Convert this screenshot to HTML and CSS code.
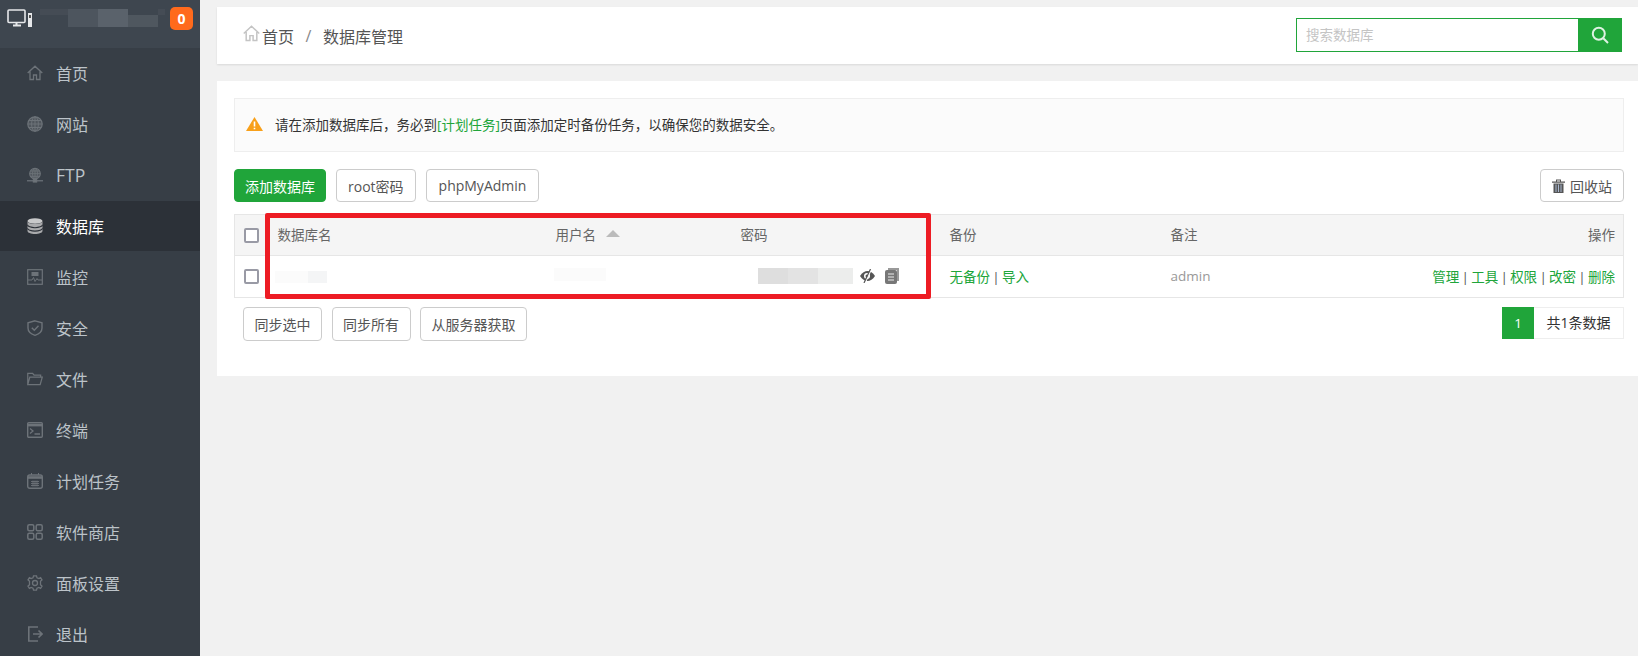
FILE: index.html
```html
<!DOCTYPE html>
<html lang="zh-CN">
<head>
    <meta charset="UTF-8">
    <meta name="viewport" content="width=device-width, initial-scale=1.0">
    <title>数据库管理</title>
    <link rel="stylesheet" href="styles.css">
</head>
<body>

<div class="sidebar">
    <div class="side-head">
        <svg class="server-icon" viewBox="0 0 25 18" fill="none" stroke="#e6e8ea">
            <rect x="1" y="1" width="17" height="12.5" rx="1" stroke-width="1.6"/>
            <path d="M6 16.5h8" stroke-width="2"/>
            <path d="M9.5 14v2" stroke-width="2"/>
            <rect x="21" y="4" width="4" height="14" fill="#e6e8ea" stroke="none"/>
            <rect x="22" y="6" width="2" height="3" fill="#555" stroke="none"/>
        </svg>
        <div class="mosaic">
            <span class="m1"></span><span class="m2"></span><span class="m3"></span><span class="m4"></span><span class="m5"></span>
        </div>
        <span class="badge">0</span>
    </div>
    <ul class="menu">
        <li>
            <svg viewBox="0 0 16 16"><path d="M.7 8 8 1.2 15.300 8M3 6.500V14.500H6.500V10H9.500V14.500H13V6.500" stroke-width="1.300"/></svg>
            首页
        </li>
        <li>
            <svg viewBox="0 0 16 16"><circle cx="8" cy="8" r="7.200" fill="#50565d" stroke-width="1.200"/><ellipse cx="8" cy="8" rx="3.400" ry="7.200"/><path d="M8 .8V15.200M.8 8H15.200M1.800 4.500H14.200M1.800 11.500H14.200"/></svg>
            网站
        </li>
        <li>
            <svg viewBox="0 0 18 16"><circle cx="9" cy="6.500" r="6" fill="#50565d" stroke-width="1.200"/><ellipse cx="9" cy="6.500" rx="2.800" ry="6"/><path d="M9 .5V12.500M3 6.500H15M4 3.500H14M4 9.500H14"/><path d="M0 14.500H18" stroke-width="1.400"/><rect x="7" y="13" width="4" height="3" fill="#6d7379"/></svg>
            <span class="menu-latin">FTP</span>
        </li>
        <li class="active">
            <svg viewBox="0 0 16 16"><ellipse cx="8" cy="3" rx="7.500" ry="2.800" fill="#c8c9ca" stroke="none"/><path d="M.5 3V13C.5 14.600 4 16 8 16S15.500 14.600 15.500 13V3C15.500 4.700 12 6 8 6S.5 4.700 .5 3Z" fill="#a9aaac" stroke="none"/><path d="M.5 6.800C.5 8.400 4 9.700 8 9.700S15.500 8.400 15.500 6.800M.5 10.200C.5 11.800 4 13.100 8 13.100S15.500 11.800 15.500 10.200" stroke="#2c3138" stroke-width="1.100"/></svg>
            数据库
        </li>
        <li>
            <svg viewBox="0 0 16 16"><rect x=".7" y=".7" width="14.600" height="14.600" stroke-width="1.200"/><path d="M1 11H5L6.500 8.500 8 12.500 10 9.500 11 11H15"/><rect x="5" y="3.500" width="6" height="3" fill="#6d7379"/></svg>
            监控
        </li>
        <li>
            <svg viewBox="0 0 16 16"><path d="M8 .8 15 2.800V8C15 11.800 11.500 14.200 8 15.300 4.500 14.200 1 11.800 1 8V2.800Z" stroke-width="1.400"/><path d="M4.800 7.800 7.300 10.300 11.500 5.800" stroke-width="1.400"/></svg>
            安全
        </li>
        <li>
            <svg viewBox="0 0 17 14"><path d="M.8 13V1H6L7.500 3H14.500V5M.8 13H14L16.200 5H3L.8 13Z" stroke-width="1.300"/></svg>
            文件
        </li>
        <li>
            <svg viewBox="0 0 16 16"><rect x=".7" y=".7" width="14.600" height="14.600" rx="1" stroke-width="1.400"/><path d="M1 3.200H15" stroke-width="2.400"/><path d="M3 6.500 6 9 3 11.500M7.500 12H13" stroke-width="1.300"/></svg>
            终端
        </li>
        <li>
            <svg viewBox="0 0 16 16"><rect x=".7" y="2" width="14.600" height="13.300" rx="2" stroke-width="1.400"/><path d="M1 4.500H15" stroke-width="2.600"/><path d="M4.500 0V2M11.500 0V2"/><path d="M4 8.500H12M4 10.500H12M4 12.500H12M6 7.500V13.500M8 7.500V13.500M10 7.500V13.500" stroke-width=".9"/></svg>
            计划任务
        </li>
        <li>
            <svg viewBox="0 0 16 16"><rect x=".8" y=".8" width="6" height="6" rx="1.500" stroke-width="1.500"/><rect x="9.200" y=".8" width="6" height="6" rx="1.500" stroke-width="1.500"/><rect x=".8" y="9.200" width="6" height="6" rx="1.500" stroke-width="1.500"/><rect x="9.200" y="9.200" width="6" height="6" rx="1.500" stroke-width="1.500"/></svg>
            软件商店
        </li>
        <li>
            <svg viewBox="0 0 16 16"><path d="M6.500.8H9.500L10 2.800 11.800 3.600 13.600 2.600 15 4.800 13.500 6.200V9.800L15 11.200 13.600 13.400 11.800 12.400 10 13.200 9.500 15.200H6.500L6 13.200 4.200 12.400 2.400 13.400 1 11.200 2.500 9.800V6.200L1 4.800 2.400 2.600 4.200 3.600 6 2.800Z" stroke-width="1.300"/><circle cx="8" cy="8" r="2.500" stroke-width="1.300"/></svg>
            面板设置
        </li>
        <li>
            <svg viewBox="0 0 16 16"><path d="M11 1H1.800V15H11M6 8H15M11.500 4.500 15 8 11.500 11.500" stroke-width="1.600"/></svg>
            退出
        </li>
    </ul>
</div>

<div class="main">
    <div class="topbar">
        <div class="crumbs">
            <svg class="crumb-home" viewBox="0 0 16 16"><path d="M.7 8 8 1.200 15.300 8M3 6.500V14.500H6.500V10H9.500V14.500H13V6.500"/></svg>
            <span>首页</span>
            <span class="crumb-sep">/</span>
            <span>数据库管理</span>
        </div>
        <div class="search">
            <input type="text" placeholder="搜索数据库">
            <button type="button" class="search-btn">
                <svg viewBox="0 0 18 18" fill="none" stroke="#dff2e3" stroke-width="2"><circle cx="7.800" cy="7.800" r="6"/><path d="M12.300 12.300 17 17"/></svg>
            </button>
        </div>
    </div>

    <div class="panel">
        <div class="notice">
            <svg class="warn-icon" viewBox="0 0 17 14"><path d="M8.500 0 17 14H0Z" fill="#f8a01a"/><path d="M8.500 4.500V9.500M8.500 10.700V12.300" stroke="#fff" stroke-width="1.600"/></svg>
            <span>请在添加数据库后，务必到<a href="#">[计划任务]</a>页面添加定时备份任务，以确保您的数据安全。</span>
        </div>

        <div class="toolbar">
            <button type="button" class="btn btn-green">添加数据库</button>
            <button type="button" class="btn btn-root">root密码</button>
            <button type="button" class="btn btn-pma">phpMyAdmin</button>
            <button type="button" class="btn btn-recycle">
                <svg viewBox="0 0 13 14"><path d="M0 2.500H13V3.700H0ZM4 2.500V.6H9V2.500H8V1.500H5V2.500ZM1.500 4.500H11.500V14H1.500Z" fill="#555"/><path d="M4 5.500V13M6.500 5.500V13M9 5.500V13" stroke="#a9b8d0" stroke-width="1"/></svg>
                回收站
            </button>
        </div>

        <table class="db-table">
            <colgroup>
                <col class="c-check"><col class="c-name"><col class="c-user"><col class="c-pass"><col class="c-backup"><col class="c-note"><col>
            </colgroup>
            <thead>
                <tr>
                    <th class="check-cell"><span class="checkbox"></span></th>
                    <th>数据库名</th>
                    <th>用户名 <span class="sort-up"></span></th>
                    <th>密码</th>
                    <th>备份</th>
                    <th>备注</th>
                    <th class="right">操作</th>
                </tr>
            </thead>
            <tbody>
                <tr>
                    <td class="check-cell"><span class="checkbox"></span></td>
                    <td><div class="blur-name"><span></span><span></span></div></td>
                    <td><div class="blur-user"></div></td>
                    <td>
                        <div class="pass-cell">
                            <div class="blur-pass"><span></span><span></span><span></span></div>
                            <svg class="eye-icon" viewBox="0 0 15 14"><path d="M0 7C2 3.500 5 2 7.500 2S13 3.500 15 7C13 10.500 10 12 7.500 12S2 10.500 0 7Z" fill="#555"/><circle cx="7" cy="7" r="3" fill="#fff"/><circle cx="7" cy="7" r="1.500" fill="#555"/><path d="M11.500 0 5 14" stroke="#fff" stroke-width="1.400"/><path d="M10.500 0 4 14" stroke="#555" stroke-width="1.200"/></svg>
                            <svg class="copy-icon" viewBox="0 0 14 16"><path d="M3 0H14V13H12V2H3Z" fill="#999"/><rect y="2" width="12" height="14" rx="2" fill="#777"/><path d="M3 6H9M3 9H9M3 12H9" stroke="#eee" stroke-width="1.200"/></svg>
                        </div>
                    </td>
                    <td><a href="#">无备份</a> | <a href="#">导入</a></td>
                    <td class="note">admin</td>
                    <td class="right"><a href="#">管理</a> | <a href="#">工具</a> | <a href="#">权限</a> | <a href="#">改密</a> | <a href="#">删除</a></td>
                </tr>
            </tbody>
        </table>

        <div class="table-foot">
            <button type="button" class="btn">同步选中</button>
            <button type="button" class="btn">同步所有</button>
            <button type="button" class="btn">从服务器获取</button>
            <div class="pager">
                <span class="page-now">1</span>
                <span class="page-total">共1条数据</span>
            </div>
        </div>
    </div>

    <div class="mark"></div>
</div>

</body>
</html>
```

FILE: styles.css
```css
* {
    box-sizing: border-box;
}
html, body {
    height: 656px;
}
body {
    margin: 0;
    display: flex;
    overflow: hidden;
    background-color: #f1f1f1;
    font-family: "Open Sans", "Noto Sans CJK SC", sans-serif;
    font-size: 13.5px;
    color: #555;
}
a {
    color: #20a53a;
    text-decoration: none;
}

/* sidebar */
.sidebar {
    width: 200px;
    height: 656px;
    flex-shrink: 0;
    overflow: hidden;
    background-color: #373e46;
}
.side-head {
    height: 48px;
    padding: 7px 7px 0;
    display: flex;
    align-items: flex-start;
    background-color: #3e464f;
}
.server-icon {
    width: 25px;
    height: 18px;
    margin-top: 2px;
    flex-shrink: 0;
}
.mosaic {
    display: flex;
    margin: 2px 0 0 8px;
    width: 130px;
}
.mosaic span {
    display: block;
    height: 18px;
}
.mosaic .m1 {
    width: 28px;
    height: 6px;
    background-color: #454c55;
}
.mosaic .m2 {
    width: 30px;
    background-color: #4d555e;
}
.mosaic .m3 {
    width: 30px;
    background-color: #5a626b;
}
.mosaic .m4 {
    width: 30px;
    height: 12px;
    margin-top: 6px;
    background-color: #4f575f;
}
.mosaic .m5 {
    width: 7px;
    height: 6px;
    background-color: #454c55;
}
.badge {
    width: 23px;
    height: 23px;
    border-radius: 5px;
    background-color: #ff6a1c;
    color: #fff;
    font-size: 14px;
    font-weight: 700;
    line-height: 23px;
    text-align: center;
}
.menu {
    list-style: none;
    margin: 0;
    padding: 0;
}
.menu li {
    height: 50px;
    margin-bottom: 1px;
    padding: 0 0 1px 27px;
    display: flex;
    align-items: center;
    font-size: 16px;
    color: #bcc3c9;
}
.menu li svg {
    width: 16px;
    height: 16px;
    margin-right: 13px;
    flex-shrink: 0;
    fill: none;
    stroke: #6d7379;
    stroke-width: 1;
}
.menu li.active {
    background-color: #2c3138;
    color: #fff;
}
.menu-latin {
    font-size: 17.5px;
}

/* main column */
.main {
    flex: 1;
    position: relative;
    padding: 7px 0 0 17px;
}
.topbar {
    height: 57px;
    padding: 0 16px 0 26px;
    display: flex;
    align-items: center;
    justify-content: space-between;
    background-color: #fff;
    box-shadow: 0 1px 2px rgba(0, 0, 0, 0.1);
}
.crumbs {
    display: flex;
    align-items: center;
    font-size: 16px;
    color: #555;
}
.crumb-home {
    width: 17px;
    height: 17px;
    margin: -5px 2px 0 0;
    fill: none;
    stroke: #c4c4c4;
    stroke-width: 1.4;
}
.crumb-sep {
    margin: 0 11.5px;
    color: #888;
}
.search {
    display: flex;
    width: 326px;
    height: 34px;
    margin-top: -1px;
}
.search input {
    flex: 1;
    min-width: 0;
    height: 34px;
    padding: 0 9px;
    border: 1px solid #20a53a;
    border-right: none;
    outline: none;
    font: inherit;
}
.search input::placeholder {
    color: #c4c4c4;
}
.search-btn {
    width: 44px;
    height: 34px;
    padding: 0;
    border: none;
    display: flex;
    align-items: center;
    justify-content: center;
    background-color: #20a53a;
}
.search-btn svg {
    width: 18px;
    height: 18px;
}

.panel {
    margin-top: 17px;
    padding: 17px 14px 35px 17px;
    background-color: #fff;
}
.notice {
    height: 54px;
    padding: 0 0 2px 11px;
    display: flex;
    align-items: center;
    gap: 12px;
    border: 1px solid #eee;
    background-color: #fbfbfb;
    color: #333;
}
.warn-icon {
    width: 17px;
    height: 14px;
}

/* buttons */
.toolbar {
    margin-top: 17px;
    display: flex;
    gap: 10px;
}
.btn {
    height: 33px;
    padding: 0 10px;
    border: 1px solid #ccc;
    border-radius: 4px;
    background-color: #fff;
    font: inherit;
    font-size: 14px;
    color: #555;
    white-space: nowrap;
}
.btn-green {
    border-color: #20a53a;
    background-color: #20a53a;
    color: #fff;
}
.btn-root {
    padding: 0 11px;
}
.btn-pma {
    padding: 0 12px;
}
.btn-recycle {
    margin-left: auto;
    padding: 0 11px;
    display: flex;
    align-items: center;
    gap: 5px;
}
.btn-recycle svg {
    width: 13px;
    height: 14px;
}

/* table */
.db-table {
    width: 100%;
    margin-top: 12px;
    table-layout: fixed;
    border-collapse: collapse;
    border: 1px solid #e6e6e6;
}
.db-table .c-check { width: 33px; }
.db-table .c-name { width: 278px; }
.db-table .c-user { width: 185px; }
.db-table .c-pass { width: 209px; }
.db-table .c-backup { width: 221px; }
.db-table .c-note { width: 200px; }
.db-table th {
    height: 41px;
    padding: 0 8px 2px 10px;
    border-bottom: 1px solid #e6e6e6;
    background-color: #f5f5f5;
    font-weight: 400;
    text-align: left;
    color: #666;
}
.db-table td {
    height: 42px;
    padding: 0 8px 2px 10px;
    word-spacing: -1.25px;
}
.db-table .right {
    text-align: right;
}
.db-table .check-cell {
    padding: 0 0 0 9px;
}
.checkbox {
    display: block;
    width: 15px;
    height: 15px;
    border: 2px solid #999aa5;
    border-radius: 2px;
    background-color: #fff;
}
.sort-up {
    display: inline-block;
    margin-left: 6px;
    border: 7px solid transparent;
    border-top: none;
    border-bottom: 7px solid #bbb;
    vertical-align: 3px;
}
.blur-name {
    display: flex;
    margin: 2px 0 0 -3px;
}
.blur-name span {
    height: 12px;
    width: 33px;
    background-color: #fbfbfb;
}
.blur-name span + span {
    width: 19px;
    background-color: #f4f5f6;
}
.blur-user {
    width: 52px;
    height: 13px;
    margin: 0 0 2px -2px;
    background-color: #fbfbfb;
}
.pass-cell {
    display: flex;
    align-items: center;
    margin-left: 17px;
}
.blur-pass {
    display: flex;
    margin-right: 7px;
}
.blur-pass span {
    width: 30px;
    height: 16px;
    background-color: #dedede;
}
.blur-pass span:nth-child(2) {
    background-color: #e3e3e3;
}
.blur-pass span:nth-child(3) {
    width: 35px;
    background-color: #ecedec;
}
.eye-icon {
    width: 15px;
    height: 14px;
    margin-right: 10px;
}
.copy-icon {
    width: 14px;
    height: 16px;
}
.note {
    color: #999;
}

.table-foot {
    margin-top: 9px;
    display: flex;
    align-items: flex-start;
    gap: 9.5px;
    padding-left: 9px;
}
.table-foot .btn {
    height: 34px;
    padding: 0 10.5px;
}
.pager {
    margin-left: auto;
    display: flex;
    height: 32px;
    line-height: 32px;
}
.page-now {
    width: 32px;
    background-color: #20a53a;
    color: #fff;
    text-align: center;
}
.page-total {
    width: 90px;
    border: 1px solid #eee;
    border-left: none;
    font-size: 14px;
    line-height: 30px;
    text-align: center;
    color: #333;
}

/* red annotation drawn over the table */
.mark {
    position: absolute;
    left: 65px;
    top: 213px;
    width: 666px;
    height: 86px;
    border: 5px solid #ed1c24;
    border-radius: 2px;
}
```
